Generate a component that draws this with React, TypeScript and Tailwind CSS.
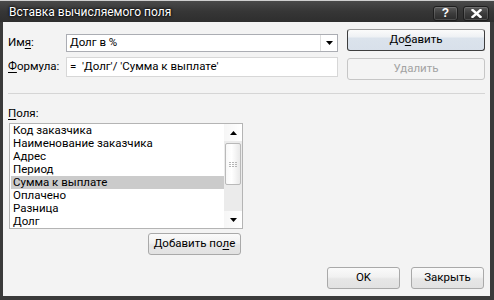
import React from "react";

function Btn({
  children,
  className = "",
  variant = "normal",
}: {
  children: React.ReactNode;
  className?: string;
  variant?: "normal" | "default" | "disabled";
}) {
  const base =
    "flex items-center justify-center rounded-[3px] h-[22px] leading-none";
  if (variant === "default") {
    return (
      <div
        className={`${base} border border-[#3d3d3d] border-t-[#9a9a9a] bg-[linear-gradient(to_bottom,#fbfbfb_0%,#eef1f4_35%,#dbe3ec_40%,#d8e0ea_100%)] text-black ${className}`}
      >
        {children}
      </div>
    );
  }
  if (variant === "disabled") {
    return (
      <div
        className={`${base} border border-[#c6c6c6] bg-[#f4f4f4] text-[#a3a3a3] ${className}`}
      >
        {children}
      </div>
    );
  }
  return (
    <div
      className={`${base} border border-[#a9a9a9] bg-[linear-gradient(to_bottom,#fafafa_0%,#f1f1f1_45%,#e6e6e6_55%,#e2e2e2_100%)] text-black ${className}`}
    >
      {children}
    </div>
  );
}

function Tri({ down = true }: { down?: boolean }) {
  return (
    <svg width="7" height="4" viewBox="0 0 7 4">
      {down ? (
        <polygon points="0,0 7,0 3.5,4" fill="#000" />
      ) : (
        <polygon points="0,4 7,4 3.5,0" fill="#000" />
      )}
    </svg>
  );
}

const items = [
  "Код заказчика",
  "Наименование заказчика",
  "Адрес",
  "Период",
  "Сумма к выплате",
  "Оплачено",
  "Разница",
  "Долг",
];

export default function App() {
  return (
    <div className="w-[494px] h-[300px] overflow-hidden flex flex-col bg-[#3a3a3a] font-['Roboto','Liberation_Sans',Arial,sans-serif] text-[11.5px] text-black">
      <div className="h-px bg-[#cfcfcf] shrink-0" />
      {/* Title bar */}
      <div className="h-[21px] shrink-0 flex items-center pl-[9px] pr-[5px] bg-[linear-gradient(to_bottom,#4a4a4a,#363636_50%,#2e2e2e)]">
        <span className="text-white text-[12px] leading-none [text-shadow:0_0_3px_#000,0_0_2px_#000]">
          Вставка вычисляемого поля
        </span>
        <div className="ml-auto flex gap-[5px] mt-[3px]">
          <div className="w-[25px] h-[15px] rounded-[3px] border border-[#1e1e1e] bg-[linear-gradient(to_bottom,#5a5a5a,#3c3c3c_50%,#2c2c2c)] shadow-[inset_0_0_0_1px_rgba(255,255,255,0.15)] flex items-center justify-center text-white font-bold text-[12px] leading-none font-['Liberation_Sans',Arial,sans-serif]">
            ?
          </div>
          <div className="w-[26px] h-[15px] rounded-[3px] border border-[#1e1e1e] bg-[linear-gradient(to_bottom,#5a5a5a,#3c3c3c_50%,#2c2c2c)] shadow-[inset_0_0_0_1px_rgba(255,255,255,0.15)] flex items-center justify-center">
            <svg width="11" height="9" viewBox="0 0 11 9">
              <path
                d="M1.5 1 L9.5 8 M9.5 1 L1.5 8"
                stroke="#fff"
                strokeWidth="2.4"
                strokeLinecap="square"
              />
            </svg>
          </div>
        </div>
      </div>
      {/* Client */}
      <div className="flex-1 ml-[3px] mr-[4px] mb-[4px] bg-[#f3f3f3] px-[5px] flex flex-col">
        <div className="flex">
          <div className="w-[330px] pt-[12px] flex flex-col gap-[5px]">
            <div className="flex items-center h-[18px]">
              <span className="w-[58px]">
                Им<span className="underline underline-offset-2">я</span>:
              </span>
              <div className="w-[272px] h-[18px] bg-white border border-[#abadb3] flex items-center">
                <span className="pl-[3px] flex-1">Долг в %</span>
                <div className="w-[17px] h-full border-l border-[#dedede] flex items-center justify-center">
                  <Tri />
                </div>
              </div>
            </div>
            <div className="flex items-center h-[20px]">
              <span className="w-[58px]">
                <span className="underline underline-offset-2">Ф</span>ормула:
              </span>
              <div className="w-[272px] h-[20px] bg-white border border-[#d7d7d7] flex items-center pl-[3px]">
                <span className="whitespace-pre">=  'Долг'/ 'Сумма к выплате'</span>
              </div>
            </div>
          </div>
          <div className="ml-[9px] w-[138px] pt-[7px] flex flex-col gap-[7px]">
            <Btn variant="default">
              До<span className="underline underline-offset-2">б</span>авить
            </Btn>
            <Btn variant="disabled">Удалить</Btn>
          </div>
        </div>
        <div className="mt-[13px] h-px bg-[#d5d5d5]" />
        <div className="mt-[11px] h-[16px] leading-[16px]">
          <span className="underline underline-offset-2">П</span>оля:
        </div>
        <div className="mt-[2px] ml-[1px] w-[234px] h-[106px] border border-[#b4b4b4] bg-white flex">
          <div className="flex-1 pl-[1px] flex flex-col">
            {items.map((it, i) => (
              <div
                key={it}
                className={`h-[13px] leading-[13px] pl-[2px] whitespace-nowrap ${
                  i === 4 ? "bg-[#cbcbcb]" : ""
                }`}
              >
                {it}
              </div>
            ))}
          </div>
          <div className="w-[18px] flex flex-col bg-[#ebebeb]">
            <div className="h-[17px] flex items-center justify-center bg-[linear-gradient(to_right,#f6f6f6,#ffffff)]">
              <Tri down={false} />
            </div>
            <div className="mt-[2px] mx-[1px] h-[42px] rounded-[2px] border border-[#b9b9b9] bg-[linear-gradient(to_right,#f7f7f7,#ffffff_40%,#e9e9e9)] flex items-center justify-center">
              <div className="grid grid-cols-3 gap-[1px]">
                {Array.from({ length: 9 }).map((_, k) => (
                  <div key={k} className="w-[2px] h-[1px] bg-[#b5b5b5]" />
                ))}
              </div>
            </div>
            <div className="flex-1" />
            <div className="h-[17px] flex items-center justify-center bg-[linear-gradient(to_right,#f6f6f6,#ffffff)]">
              <Tri />
            </div>
          </div>
        </div>
        <div className="ml-[1px] w-[234px] mt-[4px] flex justify-end pr-[2px]">
          <Btn className="w-[93px]">
            Добавить по<span className="underline underline-offset-2">л</span>е
          </Btn>
        </div>
        <div className="mt-[12px] flex justify-end gap-[11px] pr-[1px]">
          <Btn className="w-[73px]">OK</Btn>
          <Btn className="w-[73px]">Закрыть</Btn>
        </div>
      </div>
    </div>
  );
}
